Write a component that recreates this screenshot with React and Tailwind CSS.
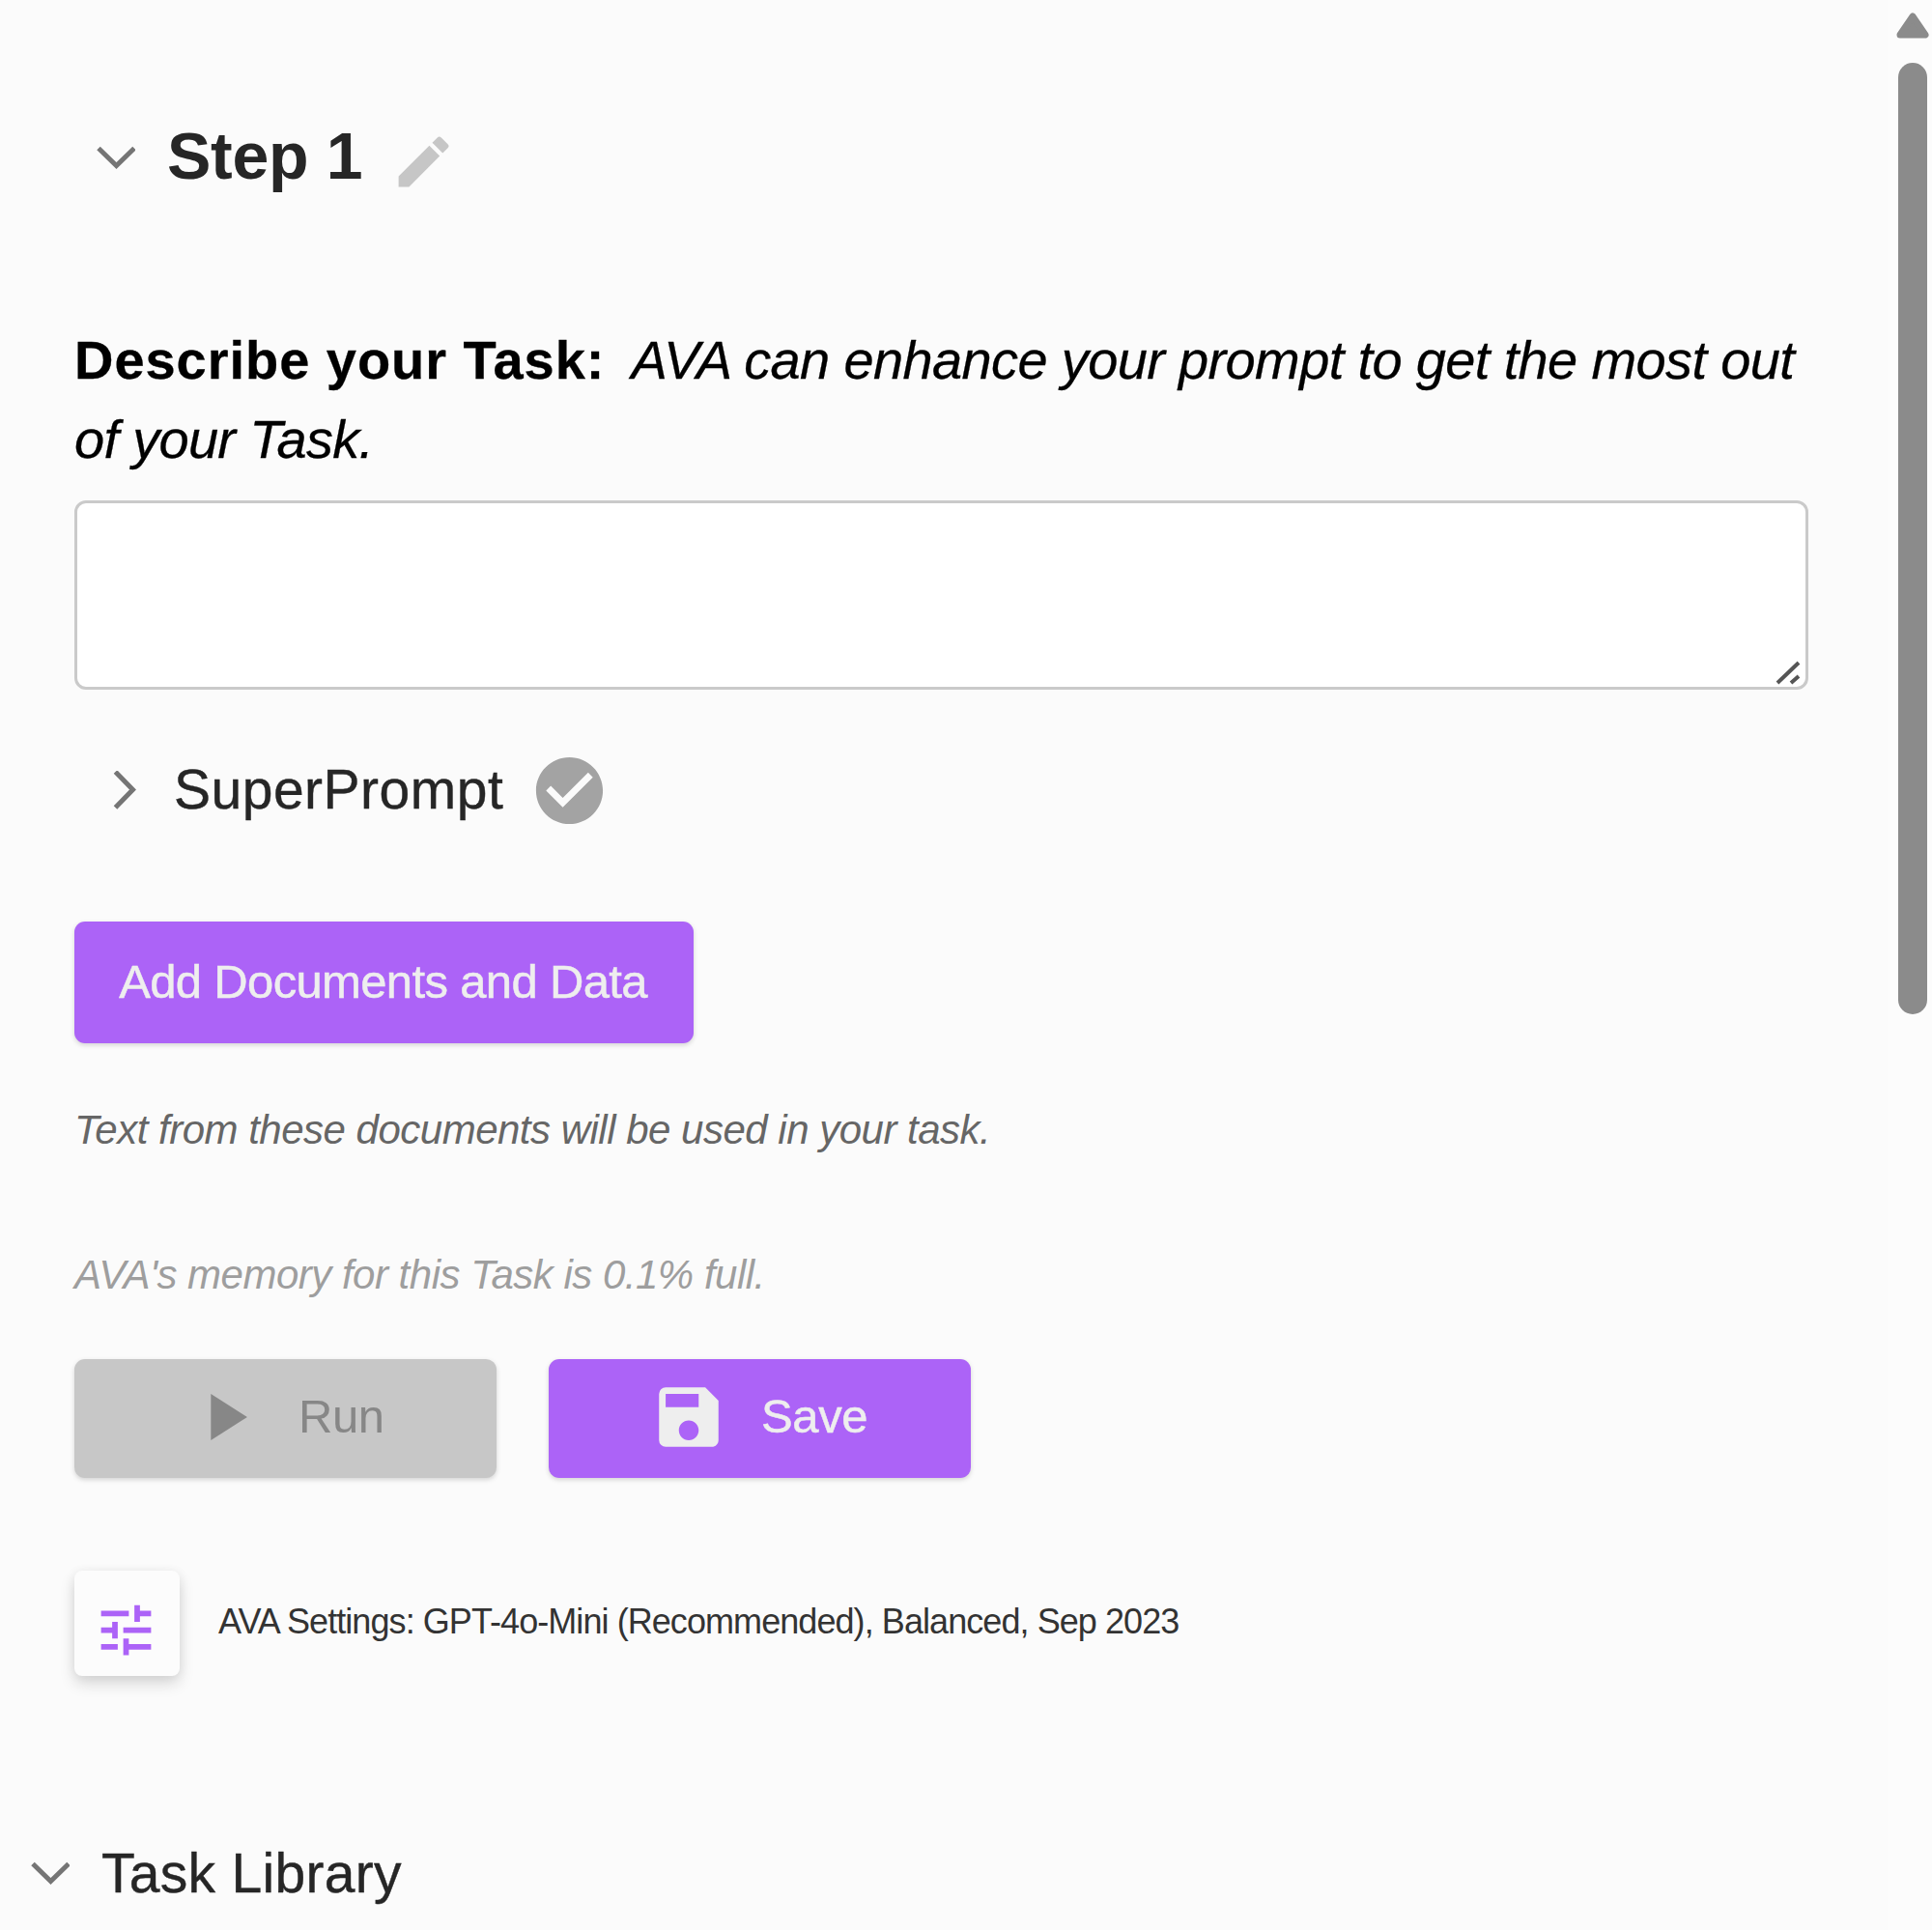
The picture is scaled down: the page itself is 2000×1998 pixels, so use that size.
import { MdCheckCircle, MdEdit, MdPlayArrow, MdSave, MdTune } from 'react-icons/md';

function Chevron({ className = '' }) {
  return (
    <svg viewBox="0 0 40 24" className={'h-6 w-10 shrink-0 ' + className} fill="none" stroke="#757575" strokeWidth="5">
      <path d="M2 2.5 L20.5 20.5 L39 2.5" />
    </svg>
  );
}

function ActionButton({ icon: Icon, label, disabled }) {
  return (
    <button
      disabled={disabled}
      className={
        'flex h-[123px] w-[437px] items-center rounded-[11px] shadow-[0_2px_5px_rgba(0,0,0,0.16)] ' +
        (disabled
          ? 'bg-[#c7c7c7] pl-[114px] text-[#878787]'
          : 'bg-[#ac63f7] pl-[104px] text-[#eeeeee] [-webkit-text-stroke:0.5px]')
      }
    >
      <Icon className="mb-[3px] size-[82px]" strokeWidth="0" />
      <span className={'pb-1 text-[49px] leading-none tracking-[-0.4px] ' + (disabled ? 'ml-[36px]' : 'ml-[34px]')}>{label}</span>
    </button>
  );
}

function Scrollbar() {
  return (
    <div className="flex w-[46px] shrink-0 flex-col items-center bg-[#fcfcfc] pl-[6px] pt-[13px]">
      <svg viewBox="0 0 34 27" className="h-[27px] w-[34px]">
        <path d="M17 4 L30 23 H4 Z" fill="#8b8b8b" stroke="#8b8b8b" strokeWidth="7" strokeLinejoin="round" />
      </svg>
      <div className="mt-[25px] h-[985px] w-[30px] rounded-full bg-[#8b8b8b]" />
    </div>
  );
}

export default function App() {
  return (
    <div className="flex h-[1998px] w-[2000px] overflow-hidden bg-[#fbfbfb] font-['Liberation_Sans',Arial,sans-serif]">
      <main className="flex min-w-0 flex-1 flex-col">
        <div className="flex flex-col items-start pl-[77px]">
          <header className="mt-[121px] flex h-20 items-center pl-[23px]">
            <Chevron className="mt-[3px]" />
            <h1 className="ml-[33px] whitespace-nowrap text-[68px] font-bold leading-none tracking-[-0.3px] text-[#262626]">Step 1</h1>
            <MdEdit className="ml-[29px] mt-[13px] size-[69px] text-[#c6c6c6]" />
          </header>

          <p className="mt-[131px] whitespace-nowrap text-[56px] leading-[82px] text-black [-webkit-text-stroke:0.3px]">
            <b className="tracking-[0.96px]">Describe your Task:</b>
            <i className="ml-[27px] tracking-[-0.64px]">AVA can enhance your prompt to get the most out</i>
            <br />
            <i className="tracking-[-0.7px]">of your Task.</i>
          </p>

          <div className="mt-[22px] flex h-[196px] w-[1795px] items-end justify-end rounded-[12px] border-[3px] border-[#cacaca] bg-white pb-[2px] pr-[5px]">
            <svg viewBox="0 0 26 26" className="size-[26px]" fill="none" stroke="#555555" strokeWidth="4">
              <path d="M2 24 L24 3 M16 24 L24 17" />
            </svg>
          </div>

          <div className="mt-[63px] flex h-20 items-center pl-[32px]">
            <Chevron className="mt-[2px] -rotate-90" />
            <span className="ml-[31px] text-[57px] leading-none tracking-[0.5px] text-[#262626] [-webkit-text-stroke:0.4px]">SuperPrompt</span>
            <MdCheckCircle className="ml-[27px] mt-[2px] size-[83px] text-[#a3a3a3]" />
          </div>

          <button className="mt-[97px] flex h-[126px] w-[641px] items-center justify-center whitespace-nowrap rounded-[11px] bg-[#ac63f7] pb-px pr-[2px] text-[49px] leading-none tracking-[-0.66px] text-[#eeeeee] shadow-[0_2px_5px_rgba(0,0,0,0.16)] [-webkit-text-stroke:0.5px]">
            Add Documents and Data
          </button>

          <p className="mt-[60px] whitespace-nowrap text-[42px] italic leading-[60px] tracking-[-0.5px] text-[#666666]">
            Text from these documents will be used in your task.
          </p>
          <p className="mt-[90px] whitespace-nowrap text-[42px] italic leading-[60px] tracking-[-0.5px] text-[#9e9e9e]">
            AVA's memory for this Task is 0.1% full.
          </p>

          <div className="mt-[57px] flex gap-[54px]">
            <ActionButton icon={MdPlayArrow} label="Run" disabled />
            <ActionButton icon={MdSave} label="Save" />
          </div>

          <div className="mt-[96px] flex items-center">
            <button className="flex size-[109px] items-center justify-center rounded-[8px] bg-[#fcfcfc] pr-[3px] pt-[13px] shadow-[0_8px_16px_rgba(0,0,0,0.14),0_1px_12px_rgba(0,0,0,0.06)]">
              <MdTune className="size-[69px] text-[#ac63f7]" />
            </button>
            <span className="ml-[40px] whitespace-nowrap pb-1 text-[36px] leading-none tracking-[-0.93px] text-[#333333]">
              AVA Settings: GPT-4o-Mini (Recommended), Balanced, Sep 2023
            </span>
          </div>
        </div>

        <div className="mt-[164px] flex h-20 items-center pl-[32px]">
          <Chevron />
          <h2 className="ml-[33px] text-[57px] leading-none tracking-[0.3px] text-[#262626] [-webkit-text-stroke:0.4px]">Task Library</h2>
        </div>
      </main>
      <Scrollbar />
    </div>
  );
}
